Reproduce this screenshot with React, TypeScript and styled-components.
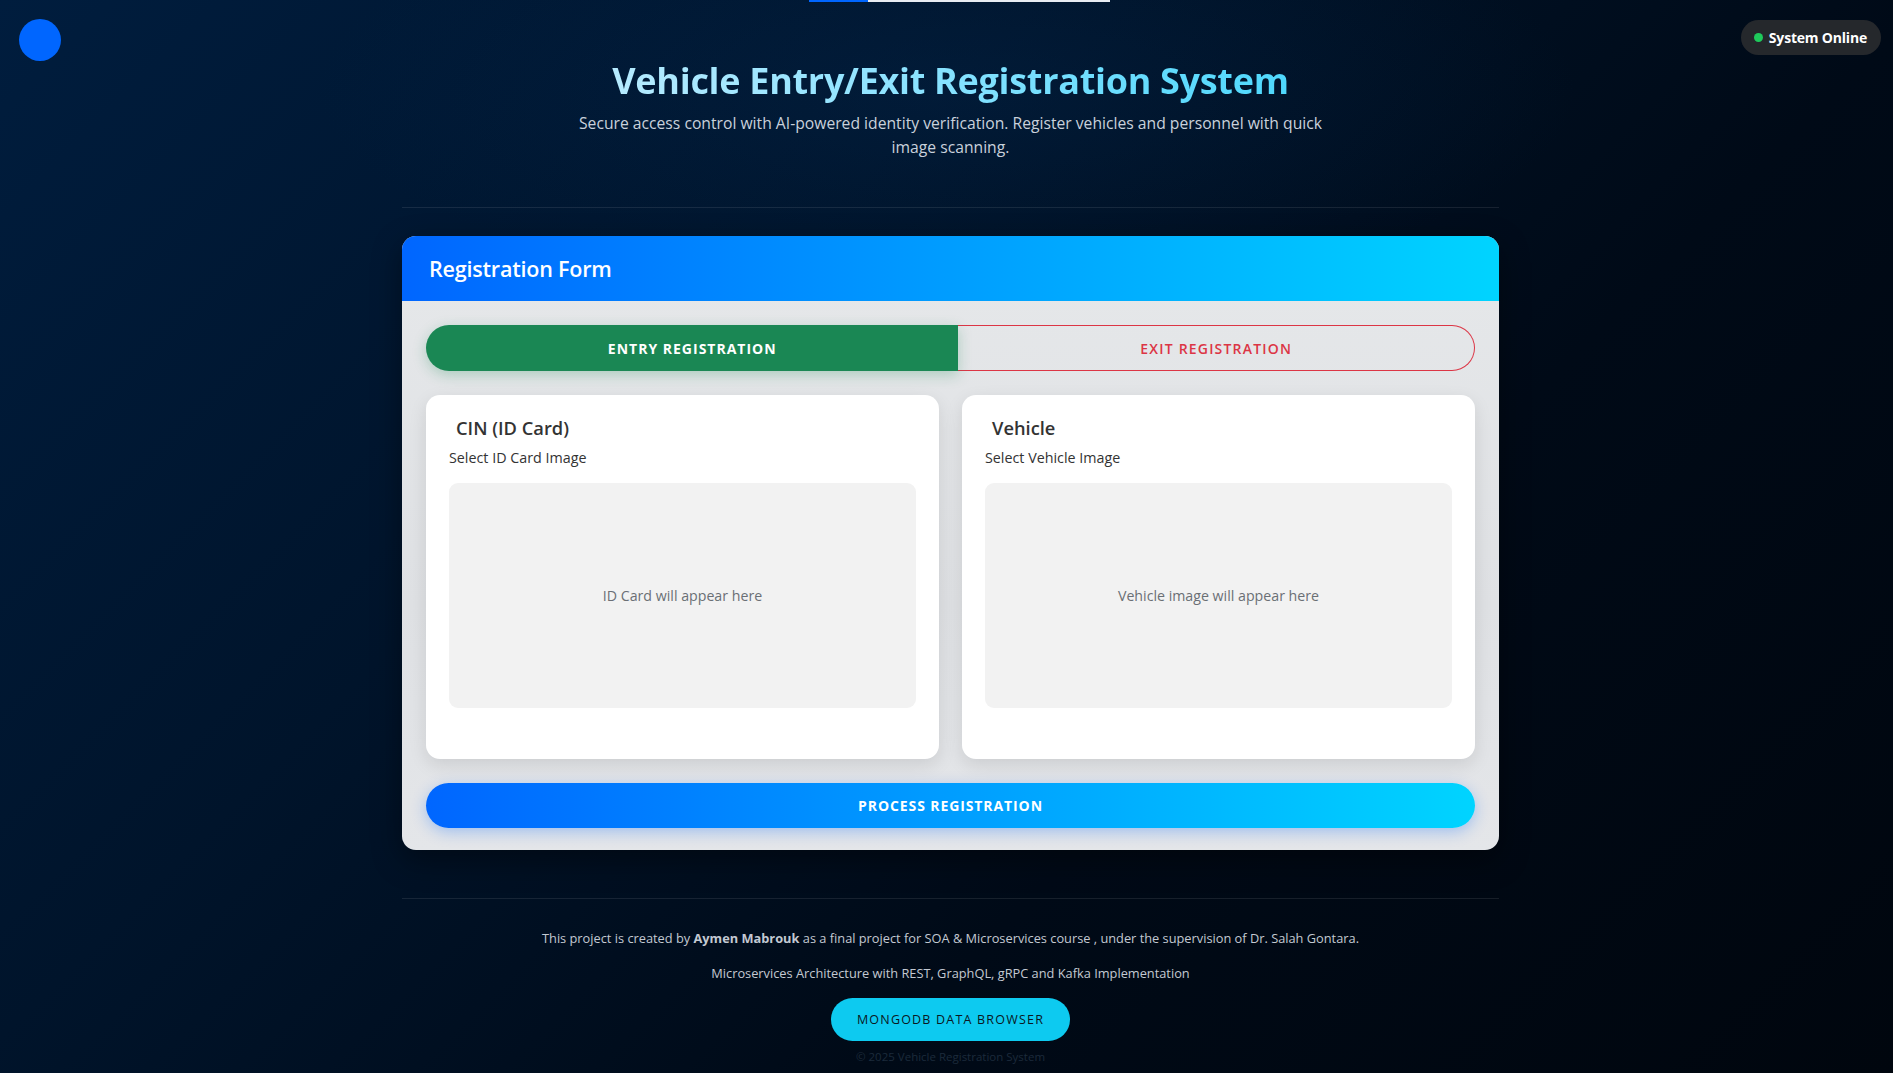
import React from "react";
import styled, { createGlobalStyle } from "styled-components";

const FONT = `"Open Sans", "Noto Sans", "Liberation Sans", sans-serif`;

const GlobalStyle = createGlobalStyle`
  html, body { margin: 0; padding: 0; }
  body {
    font-family: ${FONT};
    background: #000a16;
    min-height: 100vh;
  }
  * { box-sizing: border-box; }
`;

const Page = styled.div`
  position: relative;
  min-height: 1073px;
  overflow: hidden;
  padding: 59px 0 0 8px;
  background:
    radial-gradient(ellipse 900px 300px at 50% 90px, rgba(4, 40, 80, 0.35), transparent 70%),
    linear-gradient(135deg, #001d3e 0%, #00142b 35%, #000a17 65%, #00060e 100%);
`;

const TopProgress = styled.div`
  position: absolute;
  top: 0;
  left: 809px;
  width: 301px;
  height: 2px;
  display: flex;
  background: #e8ecf2;
`;

const ProgressFill = styled.div`
  height: 100%;
  background: #0066ff;
`;

const Orb = styled.div`
  position: absolute;
  top: 19px;
  left: 19px;
  width: 42px;
  height: 42px;
  border-radius: 50%;
  background: #0066ff;
`;

const StatusPill = styled.div`
  position: absolute;
  top: 20px;
  right: 12px;
  height: 35px;
  padding: 0 14px 0 13px;
  border-radius: 18px;
  background: #25282c;
  display: flex;
  align-items: center;
  gap: 6px;
  color: #ffffff;
  font-weight: 700;
  font-size: 14px;
  letter-spacing: -0.2px;
`;

const Dot = styled.span`
  width: 9px;
  height: 9px;
  border-radius: 50%;
  background: #1ec95b;
`;

const Container = styled.div`
  width: 1097px;
  margin: 0 auto;
`;

const Hero = styled.header`
  text-align: center;
  padding-bottom: 48px;
  border-bottom: 1px solid rgba(255, 255, 255, 0.09);
`;

const Title = styled.h1`
  margin: 0;
  font-size: 36px;
  line-height: 44px;
  font-weight: 700;
  letter-spacing: -0.3px;
  background: linear-gradient(90deg, #d2f0ff 0%, #8ee3ff 45%, #2cd2fb 100%);
  -webkit-background-clip: text;
  background-clip: text;
  color: transparent;
`;

const Subtitle = styled.p`
  margin: 8px auto 0;
  max-width: 760px;
  font-size: 15.7px;
  line-height: 24px;
  color: #c9d1dc;
`;

const FormCard = styled.section`
  margin-top: 28px;
  border-radius: 14px;
  overflow: hidden;
  background: linear-gradient(180deg, #e6e8ea 0%, #dfe1e4 60%, #e4e6e9 100%);
  box-shadow: 0 10px 30px rgba(0, 0, 0, 0.4);
`;

const FormHeader = styled.div`
  height: 65px;
  padding: 0 27px;
  display: flex;
  align-items: center;
  background: linear-gradient(90deg, #0066ff 0%, #00d4ff 100%);
  color: #ffffff;
  font-size: 21.5px;
  font-weight: 600;
  letter-spacing: -0.2px;
`;

const FormBody = styled.div`
  padding: 24px 24px 22px;
  display: flex;
  flex-direction: column;
  gap: 24px;
`;

const Tabs = styled.div`
  display: flex;
  height: 46px;
`;

const Tab = styled.button<{ $active?: boolean }>`
  flex: 1 1 auto;
  border: none;
  font-family: ${FONT};
  font-size: 14px;
  font-weight: ${(p) => (p.$active ? 700 : 600)};
  letter-spacing: ${(p) => (p.$active ? 1 : 1.2)}px;
  cursor: pointer;
  ${(p) =>
    p.$active
      ? `
    background: #1a8754;
    color: #ffffff;
    border-radius: 23px 0 0 23px;
    box-shadow: 0 4px 14px rgba(26, 135, 84, 0.28);
    position: relative;
    z-index: 1;
  `
      : `
    background: transparent;
    color: #dc3545;
    border: 1px solid #dc3545;
    border-left: none;
    border-radius: 0 23px 23px 0;
  `}
`;

const Uploads = styled.div`
  display: grid;
  grid-template-columns: 1fr 1fr;
  gap: 23px;
`;

const UploadCard = styled.div`
  background: #ffffff;
  border-radius: 14px;
  padding: 19px 23px 51px;
  box-shadow: 0 6px 18px rgba(0, 0, 0, 0.1);
`;

const UploadTitle = styled.h3`
  margin: 0 0 0 7px;
  font-size: 18.3px;
  line-height: 28px;
  font-weight: 600;
  color: #333333;
`;

const UploadLabel = styled.div`
  margin-top: 6px;
  font-size: 14.3px;
  line-height: 20px;
  color: #333333;
`;

const Preview = styled.div`
  margin-top: 15px;
  height: 225px;
  border-radius: 9px;
  background: #f2f2f2;
  display: flex;
  align-items: center;
  justify-content: center;
  font-size: 14.2px;
  color: #6a6f75;
`;

const ProcessButton = styled.button`
  height: 45px;
  border: none;
  border-radius: 23px;
  background: linear-gradient(90deg, #0066ff 0%, #00d4ff 100%);
  box-shadow: 0 4px 15px rgba(0, 102, 255, 0.3);
  color: #ffffff;
  font-family: ${FONT};
  font-size: 14px;
  font-weight: 700;
  letter-spacing: 0.9px;
  cursor: pointer;
`;

const Footer = styled.footer`
  margin-top: 48px;
  border-top: 1px solid rgba(255, 255, 255, 0.09);
  padding-top: 29px;
  text-align: center;
  display: flex;
  flex-direction: column;
  align-items: center;
`;

const FooterText = styled.p<{ $gap?: number }>`
  margin: ${(p) => p.$gap ?? 0}px 0 0;
  font-size: 12.8px;
  line-height: 20px;
  color: #c3c9d2;
  b { font-weight: 700; }
`;

const BrowserButton = styled.button`
  margin-top: 15px;
  height: 43px;
  padding: 0 26px;
  border: none;
  border-radius: 22px;
  background: #0dcaf0;
  color: #0b1722;
  font-family: ${FONT};
  font-size: 12.5px;
  font-weight: 500;
  letter-spacing: 1.2px;
  cursor: pointer;
`;

const Copyright = styled.div`
  margin-top: 7px;
  font-size: 11.5px;
  line-height: 18px;
  color: #1c2a3b;
`;

export default function App() {
  return (
    <>
      <GlobalStyle />
      <Page>
        <TopProgress>
          <ProgressFill style={{ width: "59px" }} />
        </TopProgress>
        <Orb />
        <StatusPill>
          <Dot />
          System Online
        </StatusPill>
        <Container>
          <Hero>
            <Title>Vehicle Entry/Exit Registration System</Title>
            <Subtitle>
              Secure access control with AI-powered identity verification. Register vehicles and
              personnel with quick image scanning.
            </Subtitle>
          </Hero>
          <FormCard>
            <FormHeader>Registration Form</FormHeader>
            <FormBody>
              <Tabs>
                <Tab $active>ENTRY REGISTRATION</Tab>
                <Tab>EXIT REGISTRATION</Tab>
              </Tabs>
              <Uploads>
                <UploadCard>
                  <UploadTitle>CIN (ID Card)</UploadTitle>
                  <UploadLabel>Select ID Card Image</UploadLabel>
                  <Preview>ID Card will appear here</Preview>
                </UploadCard>
                <UploadCard>
                  <UploadTitle>Vehicle</UploadTitle>
                  <UploadLabel>Select Vehicle Image</UploadLabel>
                  <Preview>Vehicle image will appear here</Preview>
                </UploadCard>
              </Uploads>
              <ProcessButton>PROCESS REGISTRATION</ProcessButton>
            </FormBody>
          </FormCard>
          <Footer>
            <FooterText>
              This project is created by <b>Aymen Mabrouk</b> as a final project for SOA &amp;
              Microservices course , under the supervision of Dr. Salah Gontara.
            </FooterText>
            <FooterText $gap={15}>
              Microservices Architecture with REST, GraphQL, gRPC and Kafka Implementation
            </FooterText>
            <BrowserButton>MONGODB DATA BROWSER</BrowserButton>
            <Copyright>© 2025 Vehicle Registration System</Copyright>
          </Footer>
        </Container>
      </Page>
    </>
  );
}
